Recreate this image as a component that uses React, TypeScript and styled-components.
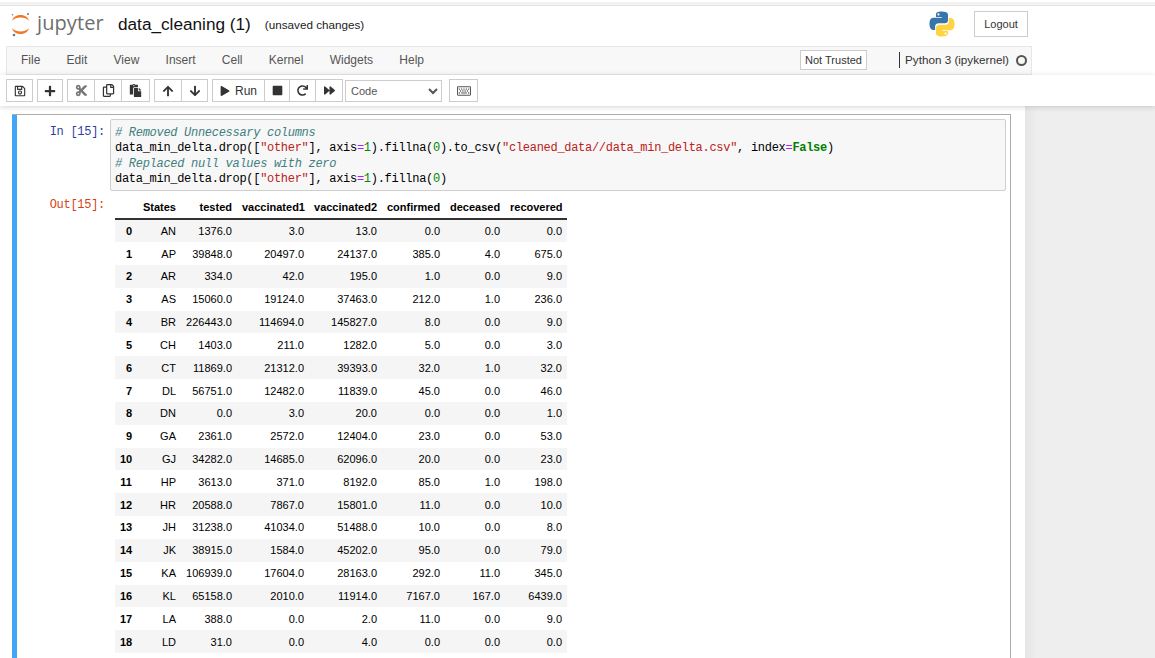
import React from "react";
import styled, { createGlobalStyle } from "styled-components";
import { FaRegSave, FaPlus, FaCut, FaRegCopy, FaPaste, FaArrowUp, FaArrowDown, FaPlay, FaStop, FaRedo, FaForward, FaRegKeyboard } from "react-icons/fa";

const Global = createGlobalStyle`
  html, body { margin: 0; padding: 0; height: 100%; overflow: hidden; background: #fff; }
  * { box-sizing: border-box; }
  body { font-family: "Liberation Sans", Arial, sans-serif; color: #000; }
`;
const Page = styled.div`width: 1155px; height: 658px; overflow: hidden; display: flex; flex-direction: column;`;
const TopStrip = styled.div`height: 6px; background: #f3f3f3; border-bottom: 1px solid #e4e4e4; border-top: 2px solid #fff;`;
const Header = styled.header`height: 40px; display: flex; align-items: center; padding: 0 127px 4px 11px; background: #fff;`;
const Brand = styled.div`display: flex; align-items: center; width: 107px; gap: 7px;`;
const Wordmark = styled.span`font-family: "Open Sans", sans-serif; font-size: 20px; color: #6e6e6e; line-height: 26px; margin-top: -2px; letter-spacing: 0.1px;`;
const Title = styled.span`font-size: 17.2px; color: #111; margin-right: 14px; white-space: nowrap;`;
const Saved = styled.span`font-size: 11.7px; color: #222; margin-top: 1px; white-space: nowrap;`;
const Spacer = styled.div`flex: 1;`;
const PyLogo = styled.svg`width: 26px; height: 26px; margin-right: 19px;`;
const Logout = styled.button`width: 54px; height: 26px; background: #fff; border: 1px solid #ccc; font: 11px "Liberation Sans", sans-serif; color: #333; padding: 0;`;
const MenuBar = styled.nav`height: 29px; width: 1026px; margin-left: 6px; background: #f8f8f8; border: 1px solid #e7e7e7; display: flex; align-items: center; padding: 0 0 1px 14px; font-size: 12px; color: #555;`;
const MenuItems = styled.div`display: flex; gap: 26.25px; width: 779px;`;
const NotTrusted = styled.span`width: 67px; height: 20px; border: 1px solid #ccc; background: #fff; color: #333; font-size: 11px; display: flex; align-items: center; justify-content: center; margin-right: 32px;`;
const Kernel = styled.span`height: 16px; border-left: 1px solid #333; padding-left: 5px; line-height: 16px; color: #333; white-space: nowrap; font-size: 11.7px;`;
const KernelDot = styled.span`width: 11px; height: 11px; flex: none; border: 2px solid #555; border-radius: 50%; margin-left: 7px;`;
const Toolbar = styled.div`height: 31px; padding: 4px 0 0 6px; display: flex; align-items: flex-start; background: #fff; box-shadow: 0 1px 5px rgba(87,87,87,.25); position: relative; z-index: 2;`;
const Group = styled.div<{ $gap?: number }>`display: flex; margin-right: ${p => p.$gap ?? 5}px;`;
const Btn = styled.button<{ $w: number }>`width: ${p => p.$w}px; height: 23px; background: #fff; border: 1px solid #ccc; margin-right: -1px; display: flex; align-items: center; justify-content: center; gap: 5px; color: #333; font: 12px "Liberation Sans", sans-serif; padding: 0; svg { display: block; }`;
const Select = styled.select`width: 97px; height: 22px; margin: 1px 7px 0 -1px; background: #fff; border: 1px solid #ccc; font: 11px "Liberation Sans", sans-serif; color: #555; padding-left: 1px;`;
const Main = styled.div`flex: 1; min-height: 0; display: flex; background: #eee;`;
const Notebook = styled.main`width: 1025px; background: #fff; padding: 8px 14px 0 12px; flex: none;`;
const Cell = styled.section`height: 100%; border: 1px solid #ababab; border-left: 0; border-bottom: 0; background: linear-gradient(90deg, #42a5f5 5px, transparent 5px); padding: 4px 4px 0 5px;`;
const Row = styled.div`display: flex;`;
const codeFont = `12px/15.4px "Liberation Mono", monospace`;
const Prompt = styled.div<{ $c: string; $top: number }>`width: 93px; flex: none; text-align: right; padding-right: 5px; color: ${p => p.$c}; font: ${codeFont}; letter-spacing: -0.29px; padding-top: ${p => p.$top}px;`;
const CodeBox = styled.pre`flex: 1; margin: 0; height: 72px; background: #f7f7f7; border: 1px solid #cfcfcf; border-radius: 2px; padding: 5.7px 4px; font: ${codeFont}; letter-spacing: -0.29px; color: #000; white-space: pre; overflow: hidden;`;
const Cm = styled.span`color: #408080; font-style: italic;`;
const Str = styled.span`color: #ba2121;`;
const Op = styled.span`color: #a2f;`;
const Num = styled.span`color: #080;`;
const Kw = styled.span`color: #008000; font-weight: bold;`;
const Output = styled(Row)`margin-top: 5px;`;
const Table = styled.table`border-collapse: collapse; table-layout: fixed; width: 452px; margin: 0 0 0 5px; font-size: 11px; color: #000; flex: none; align-self: flex-start;`;
const Th = styled.th<{ $w: number }>`width: ${p => p.$w}px; text-align: right; padding: 0 5px; height: 23.3px; font-weight: bold; border-bottom: 2px solid #333; vertical-align: middle;`;
const Tr = styled.tr<{ $odd: boolean }>`background: ${p => (p.$odd ? "#f5f5f5" : "#fff")};`;
const RowHead = styled.th`text-align: right; padding: 0 5px; height: 22.83px; font-weight: bold;`;
const Td = styled.td`text-align: right; padding: 0 5px; height: 22.83px;`;
const Side = styled.div`flex: 1; background: linear-gradient(90deg, #e6e6e6, #eee 12px);`;

const cols: [string, number][] = [["", 22], ["States", 44], ["tested", 56], ["vaccinated1", 72], ["vaccinated2", 73], ["confirmed", 63], ["deceased", 60], ["recovered", 62]];
const rows = `AN 1376.0 3.0 13.0 0.0 0.0 0.0
AP 39848.0 20497.0 24137.0 385.0 4.0 675.0
AR 334.0 42.0 195.0 1.0 0.0 9.0
AS 15060.0 19124.0 37463.0 212.0 1.0 236.0
BR 226443.0 114694.0 145827.0 8.0 0.0 9.0
CH 1403.0 211.0 1282.0 5.0 0.0 3.0
CT 11869.0 21312.0 39393.0 32.0 1.0 32.0
DL 56751.0 12482.0 11839.0 45.0 0.0 46.0
DN 0.0 3.0 20.0 0.0 0.0 1.0
GA 2361.0 2572.0 12404.0 23.0 0.0 53.0
GJ 34282.0 14685.0 62096.0 20.0 0.0 23.0
HP 3613.0 371.0 8192.0 85.0 1.0 198.0
HR 20588.0 7867.0 15801.0 11.0 0.0 10.0
JH 31238.0 41034.0 51488.0 10.0 0.0 8.0
JK 38915.0 1584.0 45202.0 95.0 0.0 79.0
KA 106939.0 17604.0 28163.0 292.0 11.0 345.0
KL 65158.0 2010.0 11914.0 7167.0 167.0 6439.0
LA 388.0 0.0 2.0 11.0 0.0 9.0
LD 31.0 0.0 4.0 0.0 0.0 0.0`.split("\n").map(r => r.split(" "));

const JupyterMark = () => (
  <svg width="19" height="25" viewBox="0 0 19 25" aria-hidden="true">
    <path d="M.8 9C2.500 4.300 6 3 9.500 3s7 1.300 8.700 6C16.200 6.700 13 5.600 9.500 5.600S2.800 6.700.8 9Z" fill="#f37726" />
    <path d="M.8 16C2.500 20.700 6 22 9.500 22s7-1.300 8.700-6C16.200 18.300 13 19.400 9.500 19.400S2.800 18.300.8 16Z" fill="#f37726" />
    <circle cx="17" cy="2" r="1" fill="#767677" />
    <circle cx="1.500" cy="2.800" r=".8" fill="#767677" />
    <circle cx="3" cy="23" r="1.300" fill="#767677" />
  </svg>
);

export default function App() {
  return (
    <Page>
      <Global />
      <TopStrip />
      <Header>
        <Brand>
          <JupyterMark />
          <Wordmark>jupyter</Wordmark>
        </Brand>
        <Title>data_cleaning (1)</Title>
        <Saved>(unsaved changes)</Saved>
        <Spacer />
        <PyLogo viewBox="0 0 110 110" aria-hidden="true">
          <path fill="#3776ab" d="M54 2C28 2 29.500 13.300 29.500 13.300V25h25v4H19S2 27 2 54s15 26 15 26h9V67s-.5-15 15-15h25s14.500.2 14.500-14V16S82.700 2 54 2Zm-14 8a4.500 4.500 0 1 1 0 9 4.500 4.500 0 0 1 0-9Z" />
          <path fill="#ffd343" d="M56 108c26 0 24.500-11.300 24.500-11.300V85h-25v-4H91s17 2 17-25-15-26-15-26h-9v13s.5 15-15 15H44s-14.500-.2-14.500 14v22S27.300 108 56 108Zm14-8a4.500 4.500 0 1 1 0-9 4.500 4.500 0 0 1 0 9Z" />
        </PyLogo>
        <Logout>Logout</Logout>
      </Header>
      <MenuBar>
        <MenuItems>
          {["File", "Edit", "View", "Insert", "Cell", "Kernel", "Widgets", "Help"].map(m => <span key={m}>{m}</span>)}
        </MenuItems>
        <NotTrusted>Not Trusted</NotTrusted>
        <Kernel>Python 3 (ipykernel)</Kernel>
        <KernelDot />
      </MenuBar>
      <Toolbar>
        <Group><Btn $w={27}><FaRegSave size={12} /></Btn></Group>
        <Group><Btn $w={26}><FaPlus size={12} /></Btn></Group>
        <Group><Btn $w={28}><FaCut size={13} color="#777" /></Btn><Btn $w={28}><FaRegCopy size={13} /></Btn><Btn $w={29}><FaPaste size={13} /></Btn></Group>
        <Group $gap={5}><Btn $w={28}><FaArrowUp size={12} /></Btn><Btn $w={27}><FaArrowDown size={12} /></Btn></Group>
        <Group $gap={4}><Btn $w={53}><FaPlay size={10} />Run</Btn><Btn $w={26}><FaStop size={11} /></Btn><Btn $w={27}><FaRedo size={11} /></Btn><Btn $w={28}><FaForward size={11} /></Btn></Group>
        <Select defaultValue="Code"><option>Code</option></Select>
        <Btn $w={29}><FaRegKeyboard size={14} color="#555" /></Btn>
      </Toolbar>
      <Main>
        <Notebook>
          <Cell>
            <Row>
              <Prompt $c="#303f9f" $top={6}>In [15]:</Prompt>
              <CodeBox>
                <Cm># Removed Unnecessary columns</Cm>{"\n"}
                data_min_delta.drop([<Str>"other"</Str>], axis<Op>=</Op><Num>1</Num>).fillna(<Num>0</Num>).to_csv(<Str>"cleaned_data//data_min_delta.csv"</Str>, index<Op>=</Op><Kw>False</Kw>){"\n"}
                <Cm># Replaced null values with zero</Cm>{"\n"}
                data_min_delta.drop([<Str>"other"</Str>], axis<Op>=</Op><Num>1</Num>).fillna(<Num>0</Num>)
              </CodeBox>
            </Row>
            <Output>
              <Prompt $c="#d84315" $top={2}>Out[15]:</Prompt>
              <Table>
                <thead>
                  <tr>{cols.map(([c, w]) => <Th key={c || "i"} $w={w}>{c}</Th>)}</tr>
                </thead>
                <tbody>
                  {rows.map((r, i) => (
                    <Tr key={i} $odd={i % 2 === 0}>
                      <RowHead>{i}</RowHead>
                      {r.map((v, j) => <Td key={j}>{v}</Td>)}
                    </Tr>
                  ))}
                </tbody>
              </Table>
            </Output>
          </Cell>
        </Notebook>
        <Side />
      </Main>
    </Page>
  );
}
